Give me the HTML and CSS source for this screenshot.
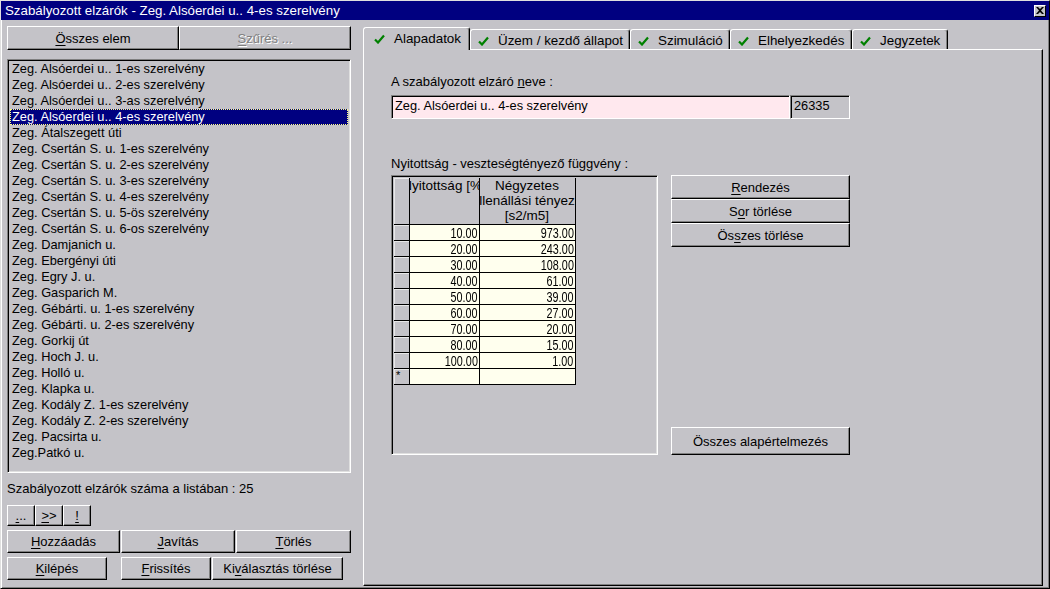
FILE: index.html
```html
<!DOCTYPE html>
<html>
<head>
<meta charset="utf-8">
<link rel="stylesheet" href="styles.css">
</head>
<body>
<div class="window">
  <div class="titlebar">
    <span class="title">Szabályozott elzárók - Zeg. Alsóerdei u.. 4-es szerelvény</span>
    <span class="close"><svg width="8" height="7" viewBox="0 0 8 7"><path d="M0 0h2l2 2 2-2h2L5 3.5 8 7H6L4 5 2 7H0l3-3.5z" fill="#000"/></svg></span>
  </div>
  <div class="main">
    <div class="left">
      <div class="toprow">
        <div class="btn w172"><u>Ö</u>sszes elem</div>
        <div class="btn w172 disabled"><u>S</u>zűrés ...</div>
      </div>
      <div class="list">
        <div class="item">Zeg. Alsóerdei u.. 1-es szerelvény</div>
        <div class="item">Zeg. Alsóerdei u.. 2-es szerelvény</div>
        <div class="item">Zeg. Alsóerdei u.. 3-as szerelvény</div>
        <div class="item selected">Zeg. Alsóerdei u.. 4-es szerelvény</div>
        <div class="item">Zeg. Átalszegett úti</div>
        <div class="item">Zeg. Csertán S. u. 1-es szerelvény</div>
        <div class="item">Zeg. Csertán S. u. 2-es szerelvény</div>
        <div class="item">Zeg. Csertán S. u. 3-es szerelvény</div>
        <div class="item">Zeg. Csertán S. u. 4-es szerelvény</div>
        <div class="item">Zeg. Csertán S. u. 5-ös szerelvény</div>
        <div class="item">Zeg. Csertán S. u. 6-os szerelvény</div>
        <div class="item">Zeg. Damjanich u.</div>
        <div class="item">Zeg. Ebergényi úti</div>
        <div class="item">Zeg. Egry J. u.</div>
        <div class="item">Zeg. Gasparich M.</div>
        <div class="item">Zeg. Gébárti. u. 1-es szerelvény</div>
        <div class="item">Zeg. Gébárti. u. 2-es szerelvény</div>
        <div class="item">Zeg. Gorkij út</div>
        <div class="item">Zeg. Hoch J. u.</div>
        <div class="item">Zeg. Holló u.</div>
        <div class="item">Zeg. Klapka u.</div>
        <div class="item">Zeg. Kodály Z. 1-es szerelvény</div>
        <div class="item">Zeg. Kodály Z. 2-es szerelvény</div>
        <div class="item">Zeg. Pacsirta u.</div>
        <div class="item">Zeg.Patkó u.</div>
      </div>
      <div class="count">Szabályozott elzárók száma a listában : 25</div>
      <div class="smallrow">
        <div class="btn w28"><u>.</u>..</div>
        <div class="btn w28"><u>&gt;</u>&gt;</div>
        <div class="btn w28"><u>!</u></div>
      </div>
      <div class="row3">
        <div class="btn w113"><u>H</u>ozzáadás</div>
        <div class="btn w114"><u>J</u>avítás</div>
        <div class="btn w116"><u>T</u>örlés</div>
      </div>
      <div class="row3 last">
        <div class="btn w100"><u>K</u>ilépés</div>
        <div class="btn w90 ml14"><u>F</u>rissítés</div>
        <div class="btn w131">Ki<u>v</u>álasztás törlése</div>
      </div>
    </div>
    <div class="right">
      <div class="tabs">
        <div class="tab sel t1"><svg class="chk" width="11" height="10" viewBox="0 0 11 10"><path d="M1 5.5 L4 8.5 L10 1.5" fill="none" stroke="#008000" stroke-width="2.2"/></svg>Alapadatok</div>
        <div class="tab t2"><svg class="chk" width="11" height="10" viewBox="0 0 11 10"><path d="M1 5.5 L4 8.5 L10 1.5" fill="none" stroke="#008000" stroke-width="2.2"/></svg>Üzem / kezdő állapot</div>
        <div class="tab t3"><svg class="chk" width="11" height="10" viewBox="0 0 11 10"><path d="M1 5.5 L4 8.5 L10 1.5" fill="none" stroke="#008000" stroke-width="2.2"/></svg>Szimuláció</div>
        <div class="tab t4"><svg class="chk" width="11" height="10" viewBox="0 0 11 10"><path d="M1 5.5 L4 8.5 L10 1.5" fill="none" stroke="#008000" stroke-width="2.2"/></svg>Elhelyezkedés</div>
        <div class="tab t5"><svg class="chk" width="11" height="10" viewBox="0 0 11 10"><path d="M1 5.5 L4 8.5 L10 1.5" fill="none" stroke="#008000" stroke-width="2.2"/></svg>Jegyzetek</div>
      </div>
      <div class="panel">
        <div class="label">A szabályozott elzáró <u>n</u>eve :</div>
        <div class="inrow">
          <div class="field pink">Zeg. Alsóerdei u.. 4-es szerelvény</div>
          <div class="field num">26335</div>
        </div>
        <div class="label l2">Nyitottság - veszteségtényező függvény :</div>
        <div class="gridrow">
          <div class="gridbox">
            <table class="grid">
              <colgroup><col class="c0"><col class="c1"><col class="c2"></colgroup>
              <tr class="hdr">
                <td class="ind"></td>
                <td><div class="clip">Nyitottság [%]</div></td>
                <td><div class="clip">Négyzetes</div><div class="clip">ellenállási tényező</div><div class="clip">[s2/m5]</div></td>
              </tr>
              <tr><td class="ind"></td><td class="n"><span>10.00</span></td><td class="n"><span>973.00</span></td></tr>
              <tr><td class="ind"></td><td class="n"><span>20.00</span></td><td class="n"><span>243.00</span></td></tr>
              <tr><td class="ind"></td><td class="n"><span>30.00</span></td><td class="n"><span>108.00</span></td></tr>
              <tr><td class="ind"></td><td class="n"><span>40.00</span></td><td class="n"><span>61.00</span></td></tr>
              <tr><td class="ind"></td><td class="n"><span>50.00</span></td><td class="n"><span>39.00</span></td></tr>
              <tr><td class="ind"></td><td class="n"><span>60.00</span></td><td class="n"><span>27.00</span></td></tr>
              <tr><td class="ind"></td><td class="n"><span>70.00</span></td><td class="n"><span>20.00</span></td></tr>
              <tr><td class="ind"></td><td class="n"><span>80.00</span></td><td class="n"><span>15.00</span></td></tr>
              <tr><td class="ind"></td><td class="n"><span>100.00</span></td><td class="n"><span>1.00</span></td></tr>
              <tr><td class="ind star">*</td><td class="n"></td><td class="n"></td></tr>
            </table>
          </div>
          <div class="sidebtns">
            <div class="stack">
              <div class="btn h24"><u>R</u>endezés</div>
              <div class="btn h24">S<u>o</u>r törlése</div>
              <div class="btn h24">Ös<u>s</u>zes törlése</div>
            </div>
            <div class="btn h27">Összes alapértelmezés</div>
          </div>
        </div>
      </div>
    </div>
  </div>
</div>
</body>
</html>
```

FILE: styles.css
```css
* { box-sizing: border-box; }
html, body { margin: 0; padding: 0; }
body {
  width: 1050px; height: 589px; overflow: hidden;
  font-family: "Liberation Sans", Arial, sans-serif;
  font-size: 13px; color: #000;
  background: #c4c3c8;
}
.window {
  width: 1050px; height: 589px;
  background: #c4c3c8;
  border: 1px solid;
  border-color: #dfdfdf #000 #000 #dfdfdf;
  box-shadow: inset 1px 1px #fff, inset -1px -1px #808080;
  display: flex; flex-direction: column;
}
.titlebar {
  height: 19px; background: #000080; color: #fff;
  display: flex; align-items: center; justify-content: space-between;
  padding: 0 3px 0 4px; font-size: 13.3px;
}
.close {
  width: 12px; height: 12px; background: #c4c3c8;
  border: 1px solid; border-color: #fff #000 #000 #fff;
  display: flex; align-items: center; justify-content: center;
}
.main {
  flex: 1; display: flex; gap: 12px;
  padding: 6px 6px 0 6px;
}
.left { width: 344px; display: flex; flex-direction: column; }
.btn {
  display: flex; align-items: center; justify-content: center;
  background: #c4c3c8;
  border: 1px solid; border-color: #fff #000 #000 #fff;
  box-shadow: inset -1px -1px #808080;
  white-space: nowrap; font-size: 13px;
}
.btn u { text-underline-offset: 2px; }
.disabled { color: #808080; text-shadow: 1px 1px #fff; }
.toprow { display: flex; gap: 0; height: 24px; }
.w172 { width: 172px; }
.list {
  margin-top: 9px; height: 414px;
  border: 1px solid; border-color: #808080 #fff #fff #808080;
  box-shadow: inset 1px 1px #000, inset -1px -1px #dfdfdf;
  padding: 1px 2px;
  overflow: hidden;
}
.item { height: 16px; line-height: 16px; padding-left: 2px; white-space: nowrap; font-size: 12.8px; }
.item.selected { background: #000080; color: #fff; outline: 1px dotted #ffff80; outline-offset: -1px; }
.count { margin-top: 8px; height: 16px; line-height: 16px; }
.smallrow { margin-top: 8px; height: 21px; display: flex; gap: 0; }
.w28 { width: 28px; }
.row3 { margin-top: 4px; height: 23px; display: flex; gap: 1px; }
.w113 { width: 113px; }
.w114 { width: 114px; }
.w116 { width: 115px; }
.w100 { width: 100px; }
.w90 { width: 90px; }
.w131 { width: 131px; }
.ml14 { margin-left: 13px; }
.right { width: 680px; display: flex; flex-direction: column; padding-top: 1px; }
.tabs { display: flex; height: 22px; align-items: flex-end; position: relative; z-index: 2; }
.tab {
  height: 20px; background: #c4c3c8;
  border: 1px solid; border-bottom: none;
  border-color: #fff #000 transparent #fff;
  box-shadow: inset -1px 0 #808080;
  border-radius: 3px 3px 0 0;
  display: flex; align-items: center; padding-left: 7px; padding-top: 2px;
  white-space: nowrap; font-size: 13.4px; overflow: hidden;
}
.tab .chk { margin-right: 9px; flex: none; }
.tab.sel { height: 23px; margin-bottom: -1px; padding-left: 10px; padding-top: 0; padding-bottom: 1px; }
.t1 { width: 107px; }
.t2 { width: 160px; }
.t3 { width: 100px; }
.t4 { width: 122px; }
.t5 { width: 96px; }
.panel {
  flex: 1; margin-bottom: 2px;
  border: 1px solid; border-color: #fff #000 #000 #fff;
  box-shadow: inset -1px -1px #808080;
  padding: 24px 0 0 27px;
  display: flex; flex-direction: column;
}
.label { height: 16px; line-height: 16px; }
.label.l2 { margin-top: 37px; }
.inrow { margin-top: 5px; display: flex; height: 24px; }
.field {
  height: 24px; line-height: 20px; padding-left: 3px;
  border: 1px solid; border-color: #808080 #fff #fff #808080;
  box-shadow: inset 1px 1px #000;
  white-space: nowrap; font-size: 12.8px;
}
.pink { width: 399px; background: #ffe8ee; }
.num { width: 60px; background: #c4c3c8; }
.gridrow { margin-top: 3px; display: flex; gap: 13px; height: 280px; }
.gridbox {
  width: 267px; height: 280px;
  border: 1px solid; border-color: #808080 #fff #fff #808080;
  box-shadow: inset 1px 1px #000, inset -1px -1px #dfdfdf;
  padding: 2px 0 0 2px;
  overflow: hidden;
}
.grid { border-collapse: collapse; table-layout: fixed; width: 181px; }
.c0 { width: 15px; }
.c1 { width: 70px; }
.c2 { width: 96px; }
.grid td {
  padding: 0; border-right: 1px solid #000; border-bottom: 1px solid #000;
  height: 16px; background: #ffffee; overflow: hidden; white-space: nowrap;
}
.grid td.ind { background: #c4c3c8; box-shadow: inset 1px 1px #e8e8e8; font-size: 11px; line-height: 13px; vertical-align: top; padding-left: 2px; }
.grid tr.hdr td { height: 46px; background: #c4c3c8; vertical-align: top; }
.clip { display: flex; justify-content: center; overflow: hidden; white-space: nowrap; height: 15px; line-height: 15px; font-size: 13.5px; }
.hdr td:nth-child(2) .clip { height: 16px; line-height: 16px; }
.grid td.n {
  text-align: right; padding-right: 1px;
  font-size: 15px; line-height: 15px;
}
.grid td.n span { display: inline-block; transform: scaleX(0.72); transform-origin: right center; }
.sidebtns { width: 179px; display: flex; flex-direction: column; justify-content: space-between; }
.stack { display: flex; flex-direction: column; }
.h24 { height: 24px; }
.h27 { height: 28px; }
```
